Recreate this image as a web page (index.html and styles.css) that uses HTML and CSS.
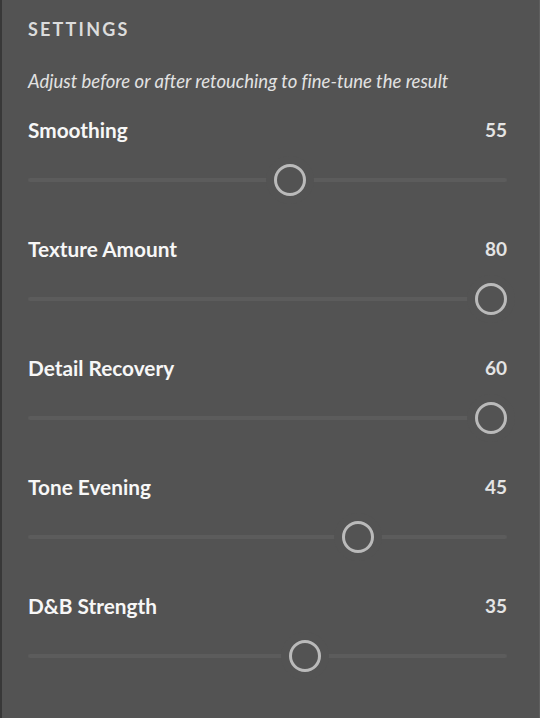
FILE: index.html
```html
<!DOCTYPE html>
<html>
<head>
<meta charset="utf-8">
<link rel="stylesheet" href="styles.css">
</head>
<body>
<div class="panel">
  <div class="title">SETTINGS</div>
  <div class="subtitle">Adjust before or after retouching to fine-tune the result</div>
  <div class="list">
    <div class="row">
      <div class="head"><span class="label">Smoothing</span><span class="value">55</span></div>
      <div class="slider" style="--p:0.55"><div class="track"></div><div class="thumb"></div></div>
    </div>
    <div class="row">
      <div class="head"><span class="label">Texture Amount</span><span class="value">80</span></div>
      <div class="slider" style="--p:1"><div class="track"></div><div class="thumb"></div></div>
    </div>
    <div class="row">
      <div class="head"><span class="label">Detail Recovery</span><span class="value">60</span></div>
      <div class="slider" style="--p:1"><div class="track"></div><div class="thumb"></div></div>
    </div>
    <div class="row">
      <div class="head"><span class="label">Tone Evening</span><span class="value">45</span></div>
      <div class="slider" style="--p:0.7025"><div class="track"></div><div class="thumb"></div></div>
    </div>
    <div class="row">
      <div class="head"><span class="label">D&amp;B Strength</span><span class="value">35</span></div>
      <div class="slider" style="--p:0.584"><div class="track"></div><div class="thumb"></div></div>
    </div>
  </div>
</div>
</body>
</html>
```

FILE: styles.css
```css
html, body {
  margin: 0;
  padding: 0;
  background: #535353;
}
.panel {
  box-sizing: border-box;
  width: 540px;
  min-height: 718px;
  background: #535353;
  border-left: 2px solid #383838;
  border-right: 1px solid #5f5f5f;
  padding: 17px 32px 0 26px;
  font-family: Lato, "Open Sans", sans-serif;
  color: #f2f2f2;
}
.title {
  font-size: 18px;
  line-height: 24px;
  font-weight: 700;
  letter-spacing: 2.2px;
  color: #dcdcdc;
}
.subtitle {
  margin-top: 28px;
  font-size: 18.5px;
  line-height: 24px;
  font-style: italic;
  font-variant-ligatures: none;
  color: #e2e2e2;
}
.list {
  margin-top: 25px;
  display: flex;
  flex-direction: column;
  gap: 41px;
}
.head {
  display: flex;
  justify-content: space-between;
  align-items: center;
  height: 24px;
  line-height: 24px;
}
.label {
  font-size: 20.8px;
  font-weight: 700;
  color: #f7f7f7;
}
.value {
  font-size: 19px;
  font-weight: 700;
  color: #e4e4e4;
}
.slider {
  position: relative;
  margin-top: 22px;
  height: 32px;
  display: flex;
  align-items: center;
}
.track {
  width: 100%;
  height: 4px;
  border-radius: 2px;
  background: #5c5c5c;
}
.thumb {
  position: absolute;
  top: 0;
  left: calc(var(--p) * (100% - 32px));
  box-sizing: border-box;
  width: 32px;
  height: 32px;
  border-radius: 50%;
  border: 3px solid #bababa;
  background: #535353;
  box-shadow: 0 0 0 8px #535353;
}
```
